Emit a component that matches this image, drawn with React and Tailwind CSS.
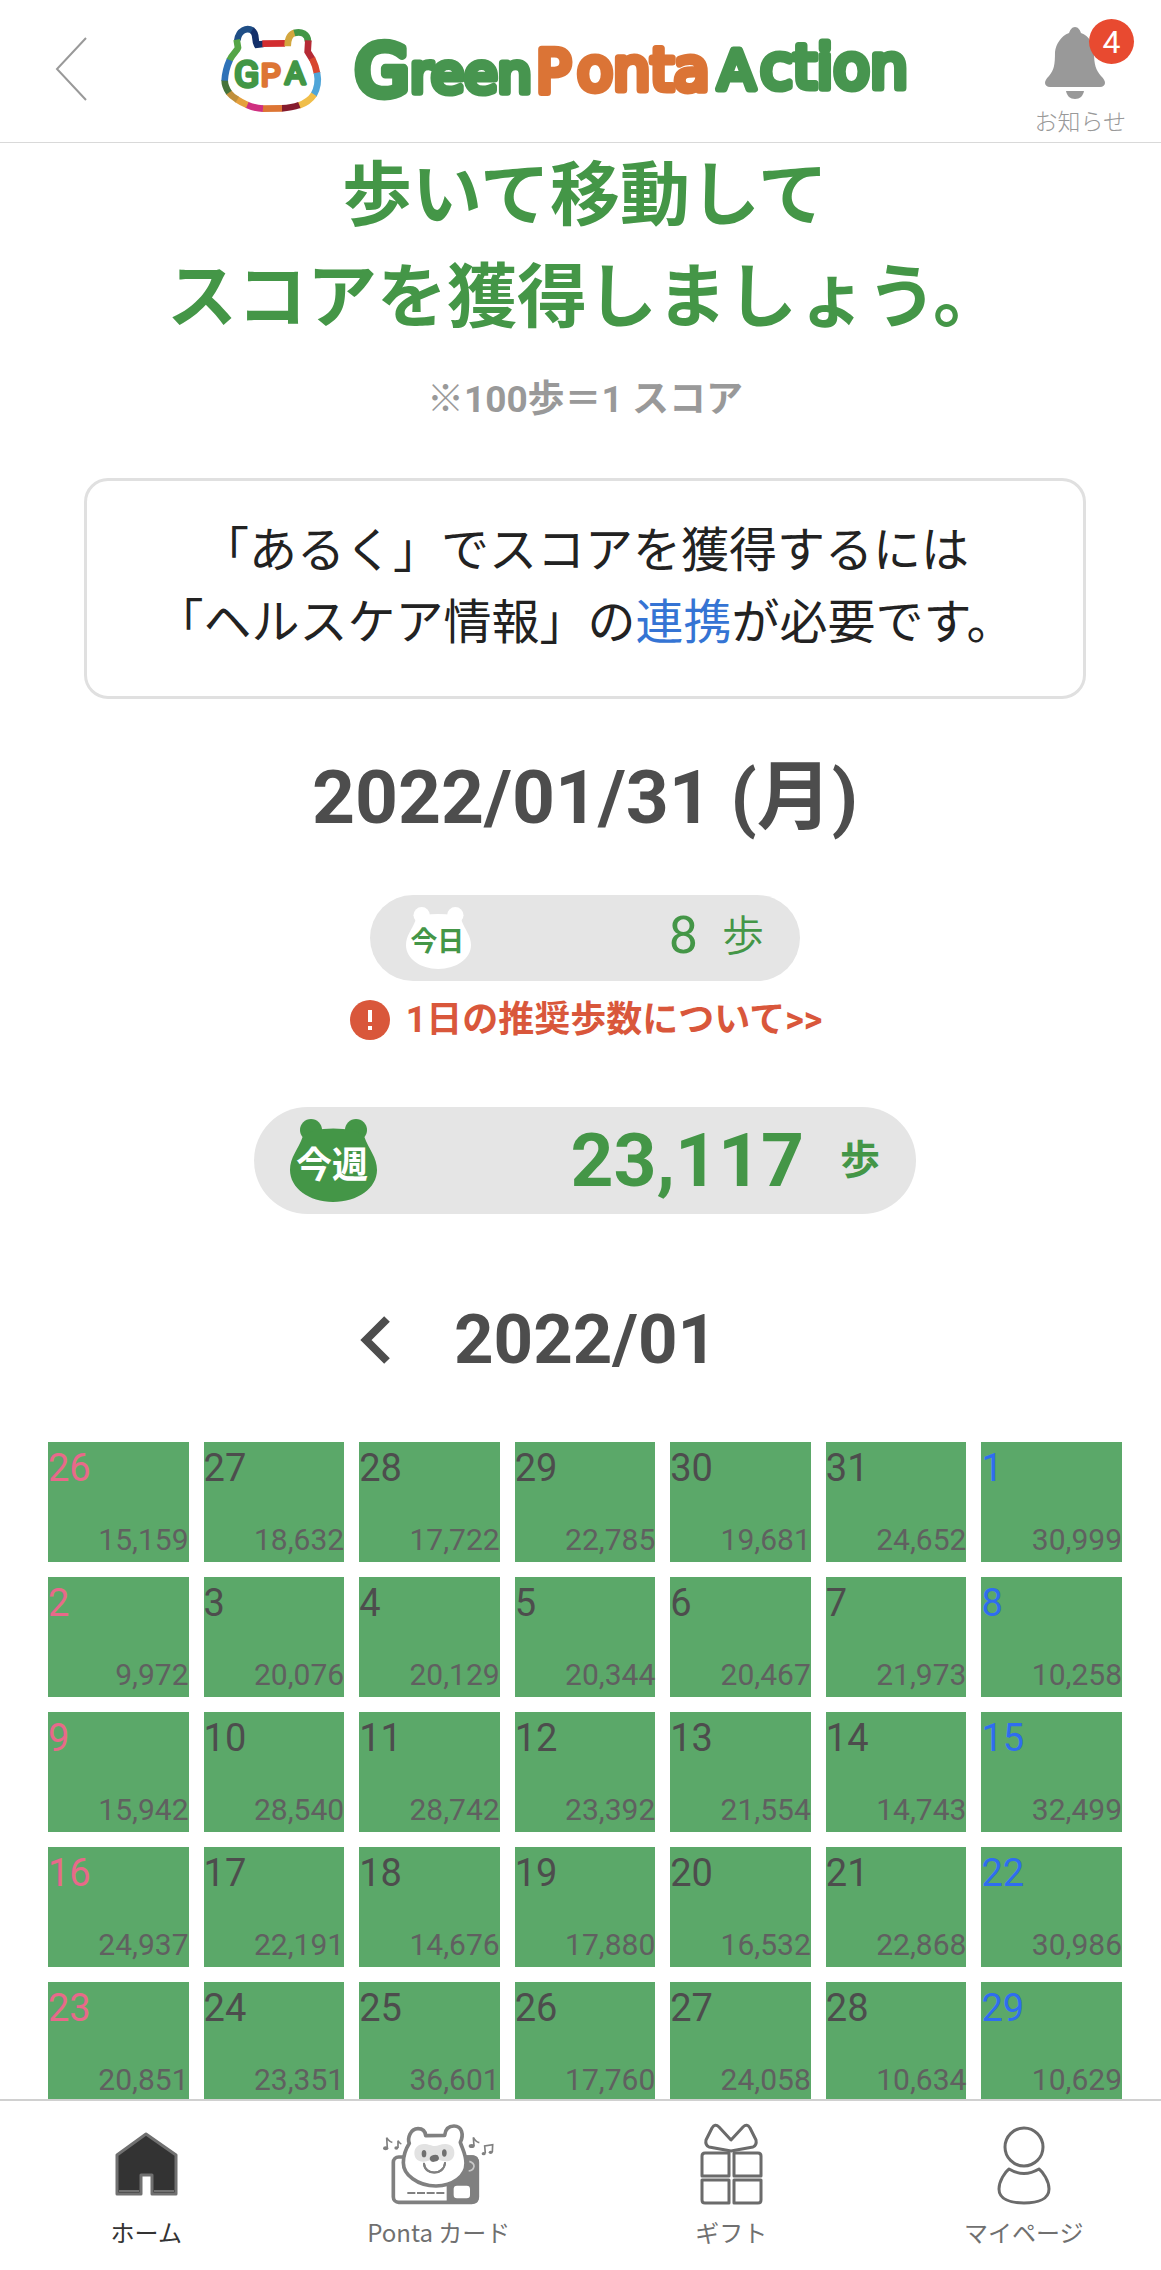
import React from "react";

const weeks = [
  [[26, "15,159"], [27, "18,632"], [28, "17,722"], [29, "22,785"], [30, "19,681"], [31, "24,652"], [1, "30,999"]],
  [[2, "9,972"], [3, "20,076"], [4, "20,129"], [5, "20,344"], [6, "20,467"], [7, "21,973"], [8, "10,258"]],
  [[9, "15,942"], [10, "28,540"], [11, "28,742"], [12, "23,392"], [13, "21,554"], [14, "14,743"], [15, "32,499"]],
  [[16, "24,937"], [17, "22,191"], [18, "14,676"], [19, "17,880"], [20, "16,532"], [21, "22,868"], [22, "30,986"]],
  [[23, "20,851"], [24, "23,351"], [25, "36,601"], [26, "17,760"], [27, "24,058"], [28, "10,634"], [29, "10,629"]],
];

// Bear outline of the logo, one stroke per colour
const logoStrokes = [
  ["#1f4e86", "M70 64 C74 34 98 24 116 35"],
  ["#14306a", "M114 34 C130 44 120 62 129 77 L148 75"],
  ["#d22d30", "M145 74 L213 73"],
  ["#d3a73f", "M221 82 C221 60 226 45 243 41"],
  ["#429646", "M241 42 C262 36 282 45 282 68"],
  ["#b52a35", "M283 64 L281 98 L295 121"],
  ["#d8462f", "M294 118 C302 134 306 146 309 163"],
  ["#4fa5d8", "M309 161 C314 185 312 205 299 228"],
  ["#f0be4a", "M300 226 C289 243 275 252 254 260"],
  ["#851b2d", "M256 258 C240 264 222 267 203 268"],
  ["#dd7534", "M204 268 L145 269"],
  ["#cf2f80", "M147 269 C130 268 115 265 98 257"],
  ["#e5a03e", "M100 258 C88 253 78 248 68 241"],
  ["#c08f3b", "M70 242 C60 236 50 228 43 219"],
  ["#45733a", "M45 221 C36 208 32 198 32 183"],
  ["#2f72b8", "M32 185 C33 165 38 143 48 121"],
  ["#55a546", "M47 123 C55 105 70 95 72 86 L68 62"],
];

const BearLogo = () => (
  <svg viewBox="0 0 348 300" className="h-[100px] w-[116px] shrink-0" aria-hidden="true">
    <g fill="none" strokeWidth="20">
      {logoStrokes.map(([color, d]) => (
        <path key={d} d={d} stroke={color} />
      ))}
    </g>
    <g className="font-[Roboto,sans-serif] font-normal" strokeWidth="10" strokeLinejoin="round">
      <text x="60" y="205" fontSize="112" fill="#429646" stroke="#429646">G</text>
      <text x="140" y="202" fontSize="94" fill="#dd7534" stroke="#dd7534">P</text>
      <text x="212" y="196" fontSize="96" fill="#429646" stroke="#429646">A</text>
    </g>
  </svg>
);

const Wordmark = () => (
  <svg viewBox="0 -20 570 110" className="h-[110px] w-[570px] shrink-0" role="img" aria-label="Green Ponta Action">
    <g className="font-['DejaVu_Sans',sans-serif]" strokeLinejoin="round" strokeWidth="7">
      <g fill="#47954f" stroke="#47954f">
        <text x="1" y="61" fontSize="70" strokeWidth="9">G</text>
        <text x="56" y="58" fontSize="54">reen</text>
      </g>
      <g fill="#db7436" stroke="#db7436">
        <text x="182" y="58" fontSize="58">P</text>
        <text x="223" y="56" fontSize="59">onta</text>
      </g>
      <g fill="#47954f" stroke="#47954f">
        <text x="364" y="55" fontSize="54">A</text>
        <text x="406" y="54" fontSize="60">ction</text>
      </g>
    </g>
  </svg>
);

const Bell = () => (
  <svg viewBox="0 0 70 72" className="h-[72px] w-[70px]" fill="#999999" aria-hidden="true">
    <path d="M30 0 C33 0 35 3 36 6 C44 9 49 17 49 25 C49 38 51 43 56 49 C59 52 60 54 60 56 C60 58 58 60 55 60 H5 C2 60 0 58 0 56 C0 54 1 52 4 49 C9 43 10 38 10 25 C11 17 16 9 24 6 C25 3 27 0 30 0 Z" />
    <path d="M21 64 H39 C38 69 35 72 30 72 C25 72 22 69 21 64 Z" />
  </svg>
);

const BearBadge = ({ text, bear, ink, className }) => (
  <svg viewBox="0 0 87 83" className={className} role="img" aria-label={text}>
    <g fill={bear}>
      <ellipse cx="21" cy="11" rx="11" ry="11" />
      <ellipse cx="66" cy="11" rx="11" ry="11" />
      <path d="M24 11 Q43 8 63 11 L74 17 C79 31 87 38 87 51 C87 69 68 83 43 83 C19 83 0 69 0 51 C0 38 8 31 13 17 Z" />
    </g>
    <text x="42" y="59" textAnchor="middle" fontSize="36" fill={ink} className="font-bold">
      {text}
    </text>
  </svg>
);

const HomeIcon = () => (
  <svg viewBox="0 0 124 95" className="h-[95px] w-[124px]" aria-hidden="true">
    <path d="M62 16 L92 37 V76 H68 V57 H57 V76 H33 V37 Z" fill="#333333" stroke="#707070" strokeWidth="3" strokeLinejoin="round" />
    <path d="M35 73 H55 M70 73 H90" stroke="#b0b0b0" strokeWidth="1" />
  </svg>
);

const CardIcon = () => (
  <svg viewBox="-4 0 375 285" className="h-[95px] w-[125px]" aria-hidden="true">
    <g fill="none" stroke="#808080" strokeWidth="11" strokeLinejoin="round">
      <rect x="48" y="117" width="252" height="136" rx="16" fill="#ffffff" />
      <path d="M208 112 H288 Q304 114 304 130 V240 Q304 257 288 257 H208 Z" fill="#808080" stroke="none" />
      <path d="M276 130 Q290 134 290 145 Q288 157 274 159" stroke="#c8c8c8" strokeWidth="5" />
      <path
        d="M96 76 C90 62 98 32 122 32 C138 32 144 42 145 53 L202 52 C204 32 214 24 230 24 C254 24 260 50 249 73 C256 95 266 110 266 136 C266 176 226 203 176 204 C120 204 78 170 78 134 C78 110 86 92 96 76 Z"
        fill="#ffffff"
      />
      <path d="M140 137 C142 173 200 173 203 135" strokeWidth="6" strokeLinecap="round" />
      <path d="M90 225 H202" strokeWidth="6" strokeDasharray="24 5" />
    </g>
    <path d="M140 78 C155 78 162 84 172 84 C182 84 190 78 204 78 C222 78 231 90 231 104 C231 120 222 130 206 130 C192 130 184 124 172 124 C160 124 152 131 138 131 C120 131 111 120 111 105 C111 90 122 78 140 78 Z" fill="#e2e2e2" />
    <g fill="#707070">
      <ellipse cx="140" cy="107" rx="7" ry="11" />
      <ellipse cx="201" cy="105" rx="7" ry="11" />
      <ellipse cx="171" cy="121" rx="14" ry="10" transform="rotate(-15 171 121)" />
    </g>
    <path d="M140 137 C142 173 200 173 203 135" fill="none" stroke="#808080" strokeWidth="6" strokeLinecap="round" />
    <rect x="229" y="203" width="49" height="38" rx="10" fill="#ffffff" />
    <g fill="none" stroke="#808080" strokeWidth="5">
      <path d="M30 91 L28 59 Q36 72 45 73 M62 90 L62 68 Q66 76 72 78" />
      <path d="M290 84 L288 58 Q296 72 306 74 M324 106 L322 84 L346 80 L345 102" />
    </g>
    <g fill="#808080">
      <ellipse cx="25" cy="91" rx="8" ry="6" />
      <ellipse cx="57" cy="90" rx="6" ry="5" />
      <ellipse cx="283" cy="84" rx="9" ry="6" />
      <ellipse cx="319" cy="107" rx="6" ry="5" />
      <ellipse cx="340" cy="103" rx="6" ry="5" />
    </g>
  </svg>
);

const GiftIcon = () => (
  <svg viewBox="0 0 124 95" className="h-[95px] w-[124px]" fill="none" stroke="#6b6b6b" strokeWidth="3" strokeLinejoin="round" aria-hidden="true">
    <path d="M62 22 L50 9 Q46 5 43 10 L37 22 Q36 27 40 29 L62 33 L84 29 Q88 27 87 22 L81 10 Q78 5 74 9 Z" />
    <path d="M60 35 V58 H33 V38 Q33 35 36 35 Z M65 35 V58 H92 V38 Q92 35 89 35 Z" />
    <path d="M60 62 V85 H36 Q33 85 33 82 V62 Z M65 62 V85 H89 Q92 85 92 82 V62 Z" />
  </svg>
);

const PersonIcon = () => (
  <svg viewBox="0 0 124 95" className="h-[95px] w-[124px]" fill="none" stroke="#6b6b6b" strokeWidth="3" strokeLinejoin="round" aria-hidden="true">
    <ellipse cx="62" cy="29" rx="19" ry="19" />
    <path d="M47 51 Q62 60 77 51 C81 54 87 63 87 71 C87 81 76 85 62 85 C48 85 37 81 37 71 C37 63 43 54 47 51 Z" />
  </svg>
);

const tabs = [
  { label: "ホーム", icon: <HomeIcon />, active: true },
  { label: "Ponta カード", icon: <CardIcon /> },
  { label: "ギフト", icon: <GiftIcon /> },
  { label: "マイページ", icon: <PersonIcon /> },
];

const dayColor = (index) => {
  if (index === 0) return "text-[#e8698a]";
  if (index === 6) return "text-[#2f6df0]";
  return "text-[#4d4d4d]";
};

const App = () => {
  return (
    <div className="overflow-hidden bg-white">
      <div className="-mr-[9px] flex h-screen flex-col font-[Roboto,'Noto_Sans_CJK_JP',sans-serif] text-[#4d4d4d]">
        <header className="flex h-[143px] shrink-0 items-center justify-between border-b border-[#d9d9d9] pr-[44px] pl-[54px]">
          <button type="button" aria-label="戻る" className="pb-1">
            <svg viewBox="0 0 34 64" className="h-16 w-[34px]" fill="none" stroke="#999999" strokeWidth="2">
              <path d="M32 1 L3 32 L32 63" />
            </svg>
          </button>
          <div className="flex items-center gap-6 pb-1 pl-4">
            <BearLogo />
            <Wordmark />
          </div>
          <button type="button" className="relative flex flex-col items-center gap-2 pt-6 text-[23px] leading-8 font-light text-[#999999]">
            <Bell />
            お知らせ
            <span className="absolute top-4 -right-2 flex size-[45px] items-center justify-center rounded-full bg-[#e84a30] text-[32px] font-normal text-white">4</span>
          </button>
        </header>

        <main className="flex min-h-0 flex-1 flex-col items-center overflow-y-auto [scrollbar-width:none]">
          <h1 className="mt-0.5 text-center text-[70px] leading-[102px] font-bold text-[#449647]">
            歩いて移動して
            <br />
            スコアを獲得しましょう。
          </h1>
          <p className="mt-6 text-[37px] leading-[54px] font-bold text-[#999999]">※100歩＝1 スコア</p>

          <div className="mx-[84px] mt-[51px] self-stretch rounded-[24px] border-[3px] border-[#e0e0e0] pt-[34px] pb-[37px] text-center text-5xl leading-[72px] text-[#222222]">
            「あるく」でスコアを獲得するには
            <br />
            「ヘルスケア情報」の
            <a href="#healthcare" className="text-[#3574d4]">連携</a>
            が必要です。
          </div>

          <h2 className="mt-12 text-[75px] leading-[100px] font-bold">2022/01/31 (月)</h2>

          <div className="mt-12 flex h-[86px] w-[430px] shrink-0 items-center rounded-full bg-[#e5e5e5] px-[36px] text-[#449647]">
            <BearBadge text="今日" bear="#ffffff" ink="#449647" className="h-[62px] w-[65px]" />
            <span className="ml-auto pb-1 text-[52px]">8</span>
            <span className="ml-6 pb-1 text-[42px] font-[350]">歩</span>
          </div>
          <a href="#recommended" className="mt-3 flex items-center gap-4 pl-0.5 text-4xl leading-[54px] font-bold text-[#d9573b]">
            <svg viewBox="0 0 40 40" className="size-10" aria-hidden="true">
              <circle cx="20" cy="20" r="20" fill="#d9573b" />
              <path d="M20 10 V22 M20 26 V30" stroke="#ffffff" strokeWidth="4" />
            </svg>
            1日の推奨歩数について&gt;&gt;
          </a>

          <div className="mt-[60px] flex h-[107px] w-[662px] shrink-0 items-center rounded-full bg-[#e5e5e5] px-[36px] font-bold text-[#449647]">
            <BearBadge text="今週" bear="#449647" ink="#ffffff" className="h-[83px] w-[87px]" />
            <span className="ml-auto text-[75px]">23,117</span>
            <span className="ml-9 text-[40px]">歩</span>
          </div>

          <div className="mt-[76px] flex w-full items-center pl-[360px]">
            <button type="button" aria-label="前の月" className="mr-16">
              <svg viewBox="0 0 30 48" className="h-12 w-[30px]" fill="none" stroke="#4d4d4d" strokeWidth="8">
                <path d="M27 3 L6 24 L27 45" />
              </svg>
            </button>
            <h2 className="text-[69px] leading-[100px] font-bold">2022/01</h2>
          </div>

          <div className="mt-[37px] self-stretch px-[33px]">
            <table className="w-full table-fixed border-separate border-spacing-[15px]">
              <tbody>
                {weeks.map((week, row) => (
                  <tr key={row}>
                    {week.map(([day, steps], index) => (
                      <td key={day} className="h-[120px] bg-[#5ba869] p-0 align-top">
                        <div className={`text-[38px] leading-[52px] ${dayColor(index)}`}>{day}</div>
                        <div className="mt-6 text-right text-[30px] leading-[44px] text-[#606060]">{steps}</div>
                      </td>
                    ))}
                  </tr>
                ))}
              </tbody>
            </table>
          </div>
        </main>

        <nav className="flex h-[171px] shrink-0 border-t-2 border-[#d0d0d0] bg-white">
          {tabs.map((tab) => (
            <a
              key={tab.label}
              href="#tab"
              className={`flex flex-1 flex-col items-center pt-[17px] text-[24px] leading-[38px] ${tab.active ? "text-[#333333]" : "text-[#707070]"}`}
            >
              {tab.icon}
              <span className="font-['Noto_Sans_CJK_JP',sans-serif]">{tab.label}</span>
            </a>
          ))}
        </nav>
      </div>
    </div>
  );
};

export default App;
